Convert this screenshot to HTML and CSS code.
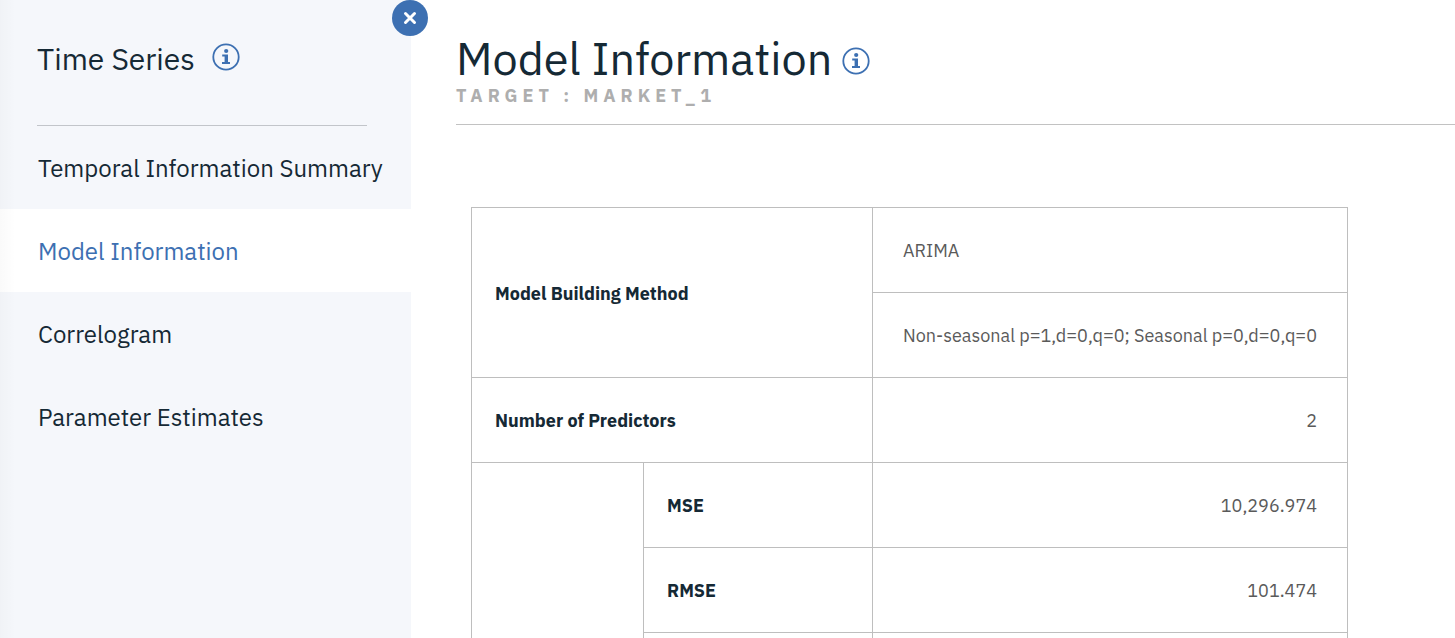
FILE: index.html
```html
<!DOCTYPE html>
<html lang="en">
<head>
<meta charset="utf-8">
<meta name="viewport" content="width=device-width, initial-scale=1">
<title>Time Series - Model Information</title>
<link rel="stylesheet" href="styles.css">
</head>
<body>
<svg class="defs" aria-hidden="true">
  <symbol id="info" viewBox="0 0 28 28">
    <circle cx="14" cy="14" r="12.7" fill="none" stroke="currentColor" stroke-width="1.8"/>
    <circle cx="14.2" cy="8" r="2.1" fill="currentColor"/>
    <path d="M10.2 11.6h5.8v7.5H18V21h-8v-1.9h2.6v-5.5h-2.4z" fill="currentColor"/>
  </symbol>
</svg>
<div class="app">
  <aside class="sidebar">
    <button class="close" type="button" aria-label="Close">
      <svg viewBox="0 0 14 14" width="14" height="14" aria-hidden="true"><path d="M2.5 2.5l9 9M11.5 2.5l-9 9" stroke="currentColor" stroke-width="3" stroke-linecap="round"/></svg>
    </button>
    <header class="sidebar-header">
      <h2 class="sidebar-title">Time Series</h2>
      <button class="info" type="button" aria-label="About time series"><svg class="info-icon"><use href="#info"/></svg></button>
    </header>
    <nav class="nav">
      <a class="nav-link" href="#temporal">Temporal Information Summary</a>
      <a class="nav-link active" href="#model" aria-current="page">Model Information</a>
      <a class="nav-link" href="#correlogram">Correlogram</a>
      <a class="nav-link" href="#estimates">Parameter Estimates</a>
    </nav>
  </aside>
  <main class="main">
    <header class="page-header">
      <div class="title-row">
        <h1 class="page-title">Model Information</h1>
        <button class="info" type="button" aria-label="About model information"><svg class="info-icon"><use href="#info"/></svg></button>
      </div>
      <p class="target">TARGET : MARKET_1</p>
    </header>
    <table class="stats">
      <colgroup><col class="col-group"><col class="col-label"><col></colgroup>
      <tbody>
        <tr><th scope="rowgroup" colspan="2" rowspan="2">Model Building Method</th><td>ARIMA</td></tr>
        <tr><td>Non-seasonal p=1,d=0,q=0; Seasonal p=0,d=0,q=0</td></tr>
        <tr><th scope="row" colspan="2">Number of Predictors</th><td class="num">2</td></tr>
        <tr><td rowspan="3"></td><th scope="row">MSE</th><td class="num">10,296.974</td></tr>
        <tr><th scope="row">RMSE</th><td class="num">101.474</td></tr>
        <tr><td></td><td></td></tr>
      </tbody>
    </table>
  </main>
</div>
</body>
</html>
```
FILE: styles.css
```css
* { box-sizing: border-box; }

body {
  margin: 0;
  font-family: "IBM Plex Sans", "Noto Sans", sans-serif;
  color: #152935;
  background: #fff;
}

h1, h2, p { margin: 0; font-weight: 400; }

button {
  border: 0;
  padding: 0;
  cursor: pointer;
}

.defs { position: absolute; width: 0; height: 0; }

.app {
  display: flex;
  height: 100vh;
  overflow: hidden;
}

.sidebar {
  position: relative;
  flex: 0 0 411px;
  background: #f5f7fb;
}

/* soft shade along the outer edge */
.sidebar::before {
  content: "";
  position: absolute;
  inset: 0 auto 0 0;
  width: 16px;
  background: linear-gradient(to right, rgba(0, 0, 0, 0.02), transparent);
  pointer-events: none;
  z-index: 1;
}

.close {
  position: absolute;
  top: 0;
  right: -17px;
  width: 36px;
  height: 36px;
  display: grid;
  place-items: center;
  border-radius: 50%;
  background: #3d70b2;
  color: #fff;
}

.sidebar-header {
  display: flex;
  align-items: flex-start;
  gap: 17px;
  margin: 0 44px 0 37px;
  padding: 39px 0 46px;
  border-bottom: 1px solid #c2c5ca;
}

.sidebar-title { font-size: 30px; line-height: 40px; }

.info {
  display: block;
  padding-top: 4px;
  background: none;
  color: #3d70b2;
}

.title-row .info { padding-top: 6px; }

.info-icon { display: block; width: 28px; height: 28px; }

.nav { display: flex; flex-direction: column; }

.nav-link {
  padding: 26px 0 25px 38px;
  font-size: 24px;
  line-height: 32px;
  white-space: nowrap;
  color: #152935;
  text-decoration: none;
}

.nav-link.active { background: #fff; color: #3d70b2; }

.main { flex: 1; min-width: 0; padding-left: 45px; }

.page-header {
  padding: 30px 0 18px;
  border-bottom: 1px solid #c2c2c2;
}

.title-row { display: flex; align-items: center; gap: 10px; }

.page-title { font-size: 45px; line-height: 56px; }

.target {
  font-size: 18px;
  font-weight: 700;
  line-height: 20px;
  letter-spacing: 5px;
  color: #aeaeae;
}

.stats {
  width: calc(100% - 30px);
  max-width: 877px;
  margin: 82px 15px 0;
  border-collapse: collapse;
  font-size: 18px;
  line-height: 24px;
}

.col-group { width: 172px; }
.col-label { width: 229px; }

.stats th, .stats td {
  height: 85px;
  padding: 31px 30px 29px;
  border: 1px solid #bebebe;
  text-align: left;
}

.stats th { padding-left: 23px; font-weight: 700; }
.stats td { color: #5a5a5a; }
.stats .num { text-align: right; }
```
